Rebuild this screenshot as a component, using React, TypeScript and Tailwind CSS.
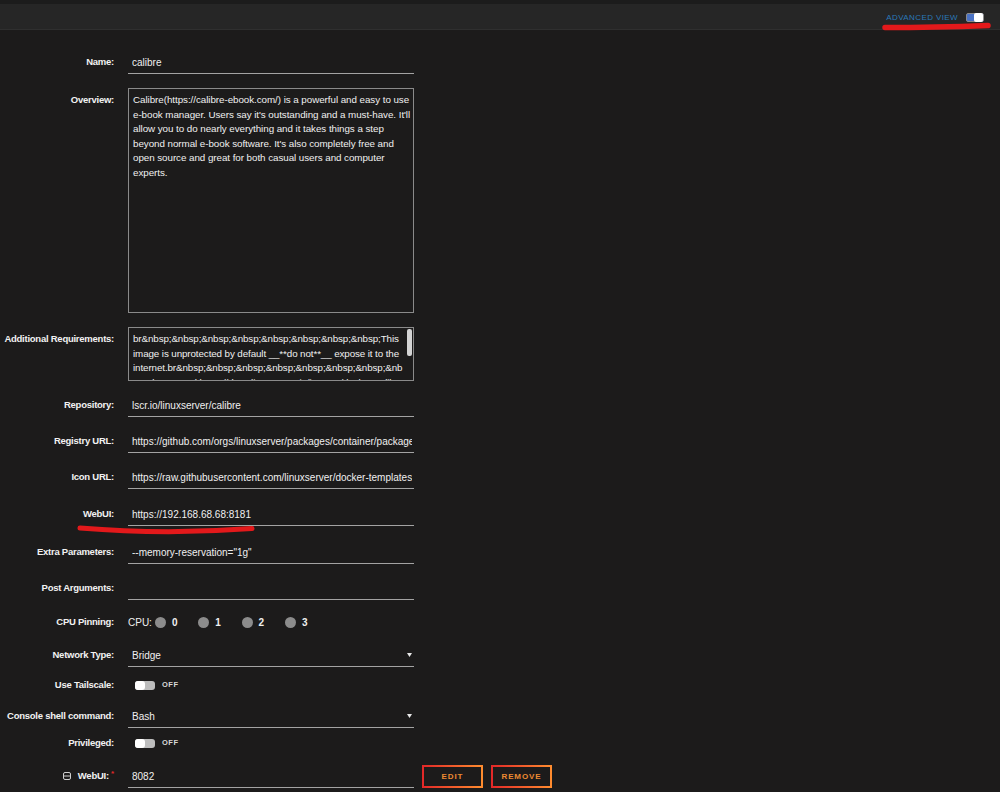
import React from "react";

const FONT = "font-['Liberation_Sans',Arial,sans-serif]";

function Label({ children, className = "" }: { children: React.ReactNode; className?: string }) {
  return (
    <div
      className={`w-[114px] shrink-0 h-[22px] flex items-center justify-end font-bold text-[9.5px] tracking-[-0.25px] text-[#f2f2f2] whitespace-nowrap ${className}`}
    >
      {children}
    </div>
  );
}

function Row({ label, mt, children, labelClass = "" }: { label: React.ReactNode; mt: string; children: React.ReactNode; labelClass?: string }) {
  return (
    <div className={`flex items-start ${mt}`}>
      <Label className={labelClass}>{label}</Label>
      <div className="ml-[14px]">{children}</div>
    </div>
  );
}

function Input({ value, select = false }: { value: string; select?: boolean }) {
  return (
    <div className="w-[286px] h-[23px] border-b border-[#a3a3a3] flex items-center pl-[4px] pr-[2px] overflow-hidden">
      <span className="flex-1 whitespace-nowrap overflow-hidden text-[10px] text-[#f0f0f0]">{value}</span>
      {select && (
        <svg width="5" height="4" viewBox="0 0 5 4" className="shrink-0">
          <path d="M0 0 L5 0 L2.5 4 Z" fill="#e8e8e8" />
        </svg>
      )}
    </div>
  );
}

function Toggle() {
  return (
    <div className="flex items-center h-[22px] pl-[7px]">
      <div className="w-[20px] h-[9px] rounded-[3px] bg-[#bdbdbd] flex items-center">
        <div className="w-[10px] h-[9px] rounded-[3px] bg-[#ffffff]" />
      </div>
      <span className="ml-[7px] text-[7.5px] font-bold tracking-[0.5px] text-[#d8d8d8]">OFF</span>
    </div>
  );
}

function GradButton({ children }: { children: React.ReactNode }) {
  return (
    <div className="w-[61px] h-[23px] flex items-center justify-center border-2 border-solid [border-image:linear-gradient(90deg,#e22828,#ff8c2f)_1]">
      <span className="text-[8px] font-bold tracking-[0.9px] text-[#ec8a32]">{children}</span>
    </div>
  );
}

const overview = [
  "Calibre(https://calibre-ebook.com/) is a powerful and easy to use",
  "e-book manager. Users say it's outstanding and a must-have. It'll",
  "allow you to do nearly everything and it takes things a step",
  "beyond normal e-book software. It's also completely free and",
  "open source and great for both casual users and computer",
  "experts.",
];

const requirements = [
  "br&nbsp;&nbsp;&nbsp;&nbsp;&nbsp;&nbsp;&nbsp;&nbsp;This",
  "image is unprotected by default __**do not**__ expose it to the",
  "internet.br&nbsp;&nbsp;&nbsp;&nbsp;&nbsp;&nbsp;&nbsp;&nb",
  "sp;Please read https://docs.linuxserver.io/images/docker-calibre",
];

export default function App() {
  return (
    <div className={`relative w-[1000px] h-[792px] overflow-hidden bg-[#1c1b1b] ${FONT} text-[#f2f2f2]`}>
      <div className="h-[4px] bg-[#1c1c1c]" />
      <div className="h-[26px] bg-[#262626] border-b border-[#2f2f2f] flex items-center justify-end pr-[16px]">
        <span className="text-[8px] tracking-[0.4px] text-[#2a78b8] mt-[2px]">ADVANCED VIEW</span>
        <div className="ml-[8px] w-[18px] h-[9px] rounded-[2px] bg-[#4a72c4] border border-[#8a8a8a] flex items-center justify-end mt-[1px]">
          <div className="w-[9px] h-[9px] rounded-[2px] bg-[#ffffff]" />
        </div>
      </div>

      <div className="flex flex-col">
        <Row label="Name:" mt="mt-[21px]">
          <Input value="calibre" />
        </Row>

        <Row label="Overview:" mt="mt-[14px]" labelClass="mt-[1px]">
          <div className="w-[286px] h-[225px] border border-[#8a8a8a] pl-[4px] pt-[4px] overflow-hidden">
            {overview.map((l, i) => (
              <div key={i} className="text-[9.8px] tracking-[-0.05px] leading-[14.5px] whitespace-pre text-[#f0f0f0]">
                {l}
              </div>
            ))}
          </div>
        </Row>

        <Row label="Additional Requirements:" mt="mt-[14px]" labelClass="mt-[1px]">
          <div className="relative w-[286px] h-[54px] border border-[#8a8a8a] pl-[4px] pr-[8px] pt-[4px] overflow-hidden">
            {requirements.map((l, i) => (
              <div key={i} className="text-[9.8px] tracking-[-0.1px] leading-[14.5px] whitespace-pre overflow-hidden text-[#f0f0f0]">
                {l}
              </div>
            ))}
            <div className="absolute right-[1px] top-[1px] w-[5px] h-[27px] rounded-[2px] bg-[#d4d4d4]" />
          </div>
        </Row>

        <Row label="Repository:" mt="mt-[13px]">
          <Input value="lscr.io/linuxserver/calibre" />
        </Row>
        <Row label="Registry URL:" mt="mt-[13px]">
          <Input value="https://github.com/orgs/linuxserver/packages/container/package/calibre" />
        </Row>
        <Row label="Icon URL:" mt="mt-[13px]">
          <Input value="https://raw.githubusercontent.com/linuxserver/docker-templates/master/linuxserver.io/img/calibre-logo.png" />
        </Row>
        <Row label="WebUI:" mt="mt-[14px]">
          <Input value="https://192.168.68.68:8181" />
        </Row>
        <Row label="Extra Parameters:" mt="mt-[15px]">
          <Input value={'--memory-reservation="1g"'} />
        </Row>
        <Row label="Post Arguments:" mt="mt-[13px]">
          <Input value="" />
        </Row>

        <Row label="CPU Pinning:" mt="mt-[11px]">
          <div className="h-[22px] flex items-center text-[10px] text-[#f0f0f0]">
            <span className="w-[27px]">CPU:</span>
            {["0", "1", "2", "3"].map((d) => (
              <div key={d} className="w-[43.3px] flex items-center">
                <div className="w-[11px] h-[11px] rounded-full bg-[#8c8c8c]" />
                <span className="ml-[6px] font-bold text-[10px]">{d}</span>
              </div>
            ))}
          </div>
        </Row>

        <Row label="Network Type:" mt="mt-[11px]">
          <Input value="Bridge" select />
        </Row>

        <Row label="Use Tailscale:" mt="mt-[7px]">
          <Toggle />
        </Row>

        <Row label="Console shell command:" mt="mt-[9px]">
          <Input value="Bash" select />
        </Row>

        <Row label="Privileged:" mt="mt-[4px]">
          <Toggle />
        </Row>

        <div className="flex items-start mt-[11px]">
          <div className="w-[114px] shrink-0 h-[22px] flex items-center justify-end whitespace-nowrap">
            <svg width="8" height="8" viewBox="0 0 8 8" className="mr-[7px]">
              <rect x="0.5" y="0.5" width="7" height="7" rx="1.5" fill="none" stroke="#cfcfcf" strokeWidth="1" />
              <line x1="0.5" y1="4" x2="7.5" y2="4" stroke="#cfcfcf" strokeWidth="1" />
            </svg>
            <span className="font-bold text-[9.5px] tracking-[-0.25px] text-[#f2f2f2]">WebUI:</span>
            <span className="ml-[2px] mb-[5px] text-[8px] font-bold text-[#e22828] leading-none">*</span>
          </div>
          <div className="ml-[14px]">
            <Input value="8082" />
          </div>
          <div className="ml-[8px]">
            <GradButton>EDIT</GradButton>
          </div>
          <div className="ml-[8px]">
            <GradButton>REMOVE</GradButton>
          </div>
        </div>
      </div>

      <svg className="absolute left-0 top-0 pointer-events-none" width="1000" height="792" viewBox="0 0 1000 792">
        <path d="M885 27.5 Q 935 27.5 988 25.5" stroke="#e3191b" strokeWidth="5.5" strokeLinecap="round" fill="none" />
        <path d="M80 528 Q 165 535 252 528.5" stroke="#e3191b" strokeWidth="5" strokeLinecap="round" fill="none" />
      </svg>
    </div>
  );
}
